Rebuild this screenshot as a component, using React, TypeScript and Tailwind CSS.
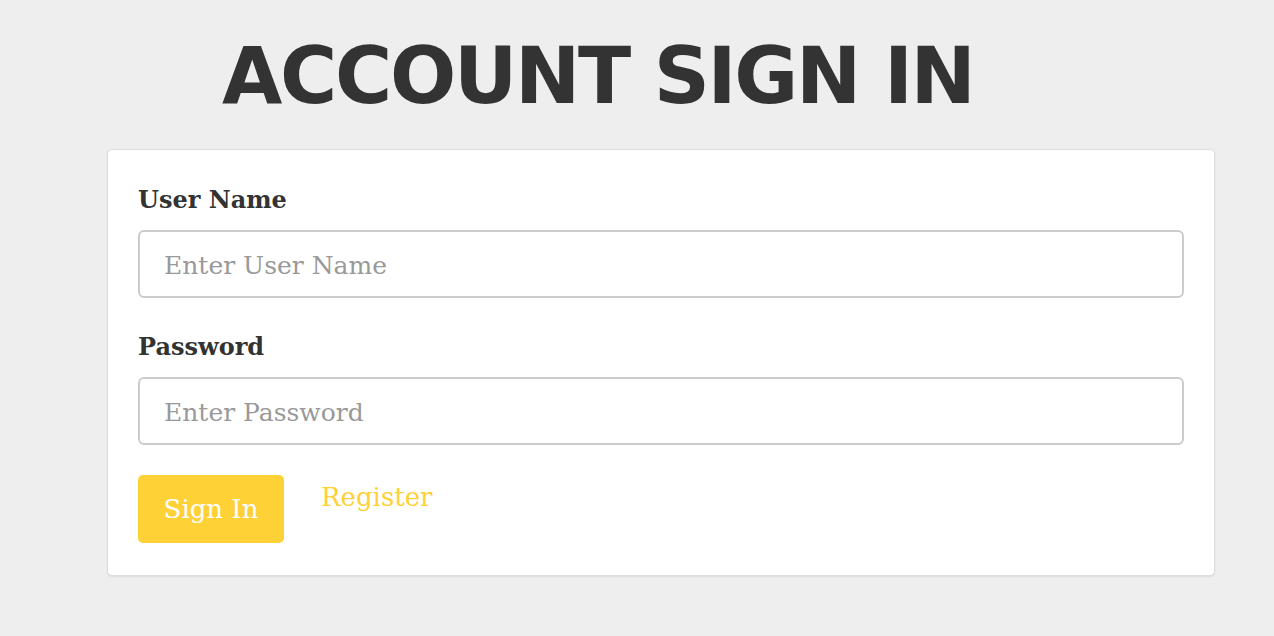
import React from 'react'

const slab = "font-['DejaVu_Serif',serif]"

const Field = ({ label, placeholder, type }: { label: string; placeholder: string; type: string }) => (
  <div className="mb-[35px]">
    <label className={`block text-[24px] leading-[28px] font-bold text-[#333333] mb-[16px] ${slab}`}>{label}</label>
    <input
      type={type}
      placeholder={placeholder}
      className={`block w-full h-[68px] px-[24px] pt-[3px] bg-white border-2 border-[#cccccc] rounded-[6px] text-[25px] text-[#555555] placeholder:text-[#999999] outline-none ${slab}`}
    />
  </div>
)

export default function App() {
  return (
    <div className="min-h-screen bg-[#eeeeee] pt-[36px]">
      <h1 className="ml-[222px] text-[78px] leading-[80px] font-bold tracking-[-2.3px] text-[#333333] font-['DejaVu_Sans',sans-serif] whitespace-nowrap">
        ACCOUNT SIGN IN
      </h1>
      <div className="ml-[107px] mt-[33px] w-[1108px] bg-white border border-[#dddddd] rounded-[5px] shadow-[0_1px_2px_rgba(0,0,0,0.08)] pl-[30px] pr-[30px] pt-[36px] pb-[32px]">
        <Field label="User Name" placeholder="Enter User Name" type="text" />
        <Field label="Password" placeholder="Enter Password" type="password" />
        <div className="flex items-start gap-[37px] -mt-[5px]">
          <button className={`h-[68px] w-[146px] bg-[#fed136] rounded-[5px] text-white text-[26px] ${slab}`}>Sign In</button>
          <a href="#" className={`mt-[6px] text-[26px] leading-[32px] text-[#fed136] ${slab}`}>Register</a>
        </div>
      </div>
    </div>
  )
}
